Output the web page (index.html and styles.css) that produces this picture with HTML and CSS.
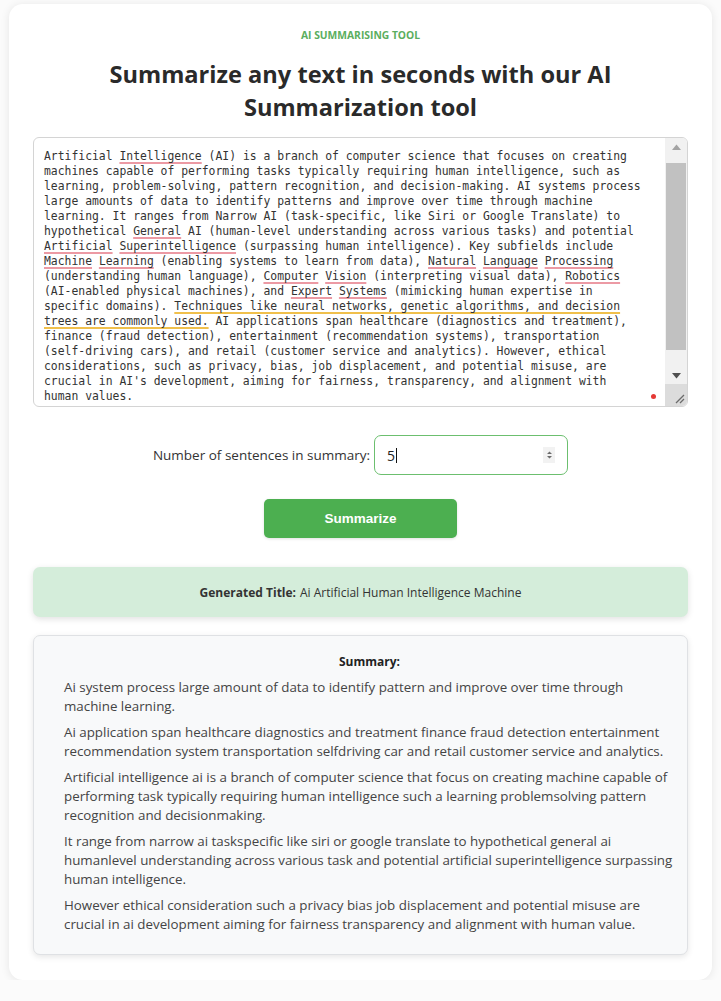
FILE: index.html
```html
<!DOCTYPE html>
<html lang="en">
<head>
<meta charset="utf-8">
<title>AI Summarising Tool</title>
<link rel="stylesheet" href="styles.css">
</head>
<body>
<main class="card">
  <p class="eyebrow">AI SUMMARISING TOOL</p>
  <h1 class="headline">Summarize any text in seconds with our AI Summarization tool</h1>

  <div class="editor">
    <div class="editor-text">
      <div class="editor-content">Artificial <span class="sp">Intelligence</span> (AI) is a branch of computer science that focuses on creating machines capable of performing tasks typically requiring human intelligence, such as learning, problem-solving, pattern recognition, and decision-making. AI systems process large amounts of data to identify patterns and improve over time through machine learning. It ranges from Narrow AI (task-specific, like Siri or Google Translate) to hypothetical <span class="sp">General</span> AI (human-level understanding across various tasks) and potential <span class="sp">Artificial</span> <span class="sp">Superintelligence</span> (surpassing human intelligence). Key subfields include <span class="sp">Machine</span> <span class="sp">Learning</span> (enabling systems to learn from data), <span class="sp">Natural</span> <span class="sp">Language</span> <span class="sp">Processing</span> (understanding human language), <span class="sp">Computer</span> <span class="sp">Vision</span> (interpreting visual data), <span class="sp">Robotics</span> (AI-enabled physical machines), and <span class="sp">Expert</span> <span class="sp">Systems</span> (mimicking human expertise in specific domains). <span class="gr">Techniques like neural networks, genetic algorithms, and decision trees are commonly used.</span> AI applications span healthcare (diagnostics and treatment), finance (fraud detection), entertainment (recommendation systems), transportation (self-driving cars), and retail (customer service and analytics). However, ethical considerations, such as privacy, bias, job displacement, and potential misuse, are crucial in AI's development, aiming for fairness, transparency, and alignment with human values.</div>
      <span class="status-dot"></span>
    </div>
    <div class="scrollbar">
      <div class="sb-arrow">
        <svg width="9" height="6" viewBox="0 0 9 6"><path d="M0 6 L4.5 0.5 L9 6 Z" fill="#a3a3a3"/></svg>
      </div>
      <div class="sb-track"><div class="sb-thumb"></div></div>
      <div class="sb-arrow">
        <svg width="9" height="6" viewBox="0 0 9 6"><path d="M0 0 L4.5 5.5 L9 0 Z" fill="#505050"/></svg>
      </div>
      <div class="sb-corner">
        <svg width="12" height="12" viewBox="0 0 12 12"><path d="M11 3 L3 11 M11 7 L7 11" stroke="#6b6b6b" stroke-width="1.3" fill="none"/></svg>
      </div>
    </div>
  </div>

  <div class="count-row">
    <label class="count-label">Number of sentences in summary:</label>
    <div class="count-input">
      <span class="count-value">5</span><span class="caret"></span>
      <span class="spin">
        <svg width="7" height="10" viewBox="0 0 7 10"><path d="M1 4 L3.5 1.5 L6 4 Z M1 6 L3.5 8.5 L6 6 Z" fill="#6b6b6b"/></svg>
      </span>
    </div>
  </div>

  <div class="actions">
    <button class="btn" type="button">Summarize</button>
  </div>

  <section class="title-box">
    <strong>Generated Title:</strong> Ai Artificial Human Intelligence Machine
  </section>

  <section class="summary-box">
    <h2 class="summary-head">Summary:</h2>
    <p>Ai system process large amount of data to identify pattern and improve over time through machine learning.</p>
    <p>Ai application span healthcare diagnostics and treatment finance fraud detection entertainment recommendation system transportation selfdriving car and retail customer service and analytics.</p>
    <p>Artificial intelligence ai is a branch of computer science that focus on creating machine capable of performing task typically requiring human intelligence such a learning problemsolving pattern recognition and decisionmaking.</p>
    <p>It range from narrow ai taskspecific like siri or google translate to hypothetical general ai humanlevel understanding across various task and potential artificial superintelligence surpassing human intelligence.</p>
    <p>However ethical consideration such a privacy bias job displacement and potential misuse are crucial in ai development aiming for fairness transparency and alignment with human value.</p>
  </section>
</main>
</body>
</html>
```

FILE: styles.css
```css
* { box-sizing: border-box; }

html, body {
  margin: 0;
  padding: 0;
  background: #fbfbfb;
}

body {
  font-family: "Open Sans", "Noto Sans", sans-serif;
  color: #333;
  padding: 4px 9px 0 9px;
}

.card {
  background: #ffffff;
  border-radius: 14px;
  box-shadow: 0 1px 10px rgba(0, 0, 0, 0.09);
  padding: 24px 24px 25px 24px;
  height: 976px;
}

.eyebrow {
  margin: 0;
  text-align: center;
  font-size: 10.3px;
  font-weight: 700;
  color: #5aae5e;
  line-height: 14px;
}

.headline {
  margin: 16px auto 13px auto;
  text-align: center;
  font-size: 23.6px;
  font-weight: 700;
  line-height: 33px;
  color: #2a2a2a;
  max-width: 600px;
}

/* editor */
.editor {
  display: flex;
  height: 270px;
  border: 1px solid #d4d4d4;
  border-radius: 6px;
  overflow: hidden;
  background: #fff;
}

.editor-text {
  flex: 1;
  position: relative;
  padding: 11px 0 4px 10px;
  font-family: "DejaVu Sans Mono", "Liberation Mono", monospace;
  font-size: 11.4px;
  line-height: 15px;
  color: #333;
}

.editor-content {
  width: 87.5ch;
}

.sp {
  text-decoration: underline;
  text-decoration-color: #ec9aa4;
  text-decoration-thickness: 1.5px;
  text-underline-offset: 2px;
  text-decoration-skip-ink: none;
}

.gr {
  text-decoration: underline;
  text-decoration-color: #f0c04c;
  text-decoration-thickness: 2px;
  text-underline-offset: 2px;
  text-decoration-skip-ink: none;
}

.status-dot {
  position: absolute;
  right: 9px;
  bottom: 7px;
  width: 5px;
  height: 5px;
  border-radius: 50%;
  background: #e53935;
}

.scrollbar {
  width: 22px;
  display: flex;
  flex-direction: column;
  background: #f1f1f1;
}

.sb-arrow {
  height: 17px;
  display: flex;
  align-items: center;
  justify-content: center;
}

.sb-track {
  flex: 1;
  padding: 8px 1px 0 1px;
}

.sb-thumb {
  height: 187px;
  background: #c1c1c1;
}

.sb-corner {
  height: 22px;
  background: #dcdcdc;
  display: flex;
  align-items: flex-end;
  justify-content: flex-end;
  padding: 0 2px 2px 0;
}

/* count row */
.count-row {
  display: flex;
  justify-content: center;
  align-items: center;
  gap: 4px;
  margin-top: 28px;
}

.count-label {
  font-size: 13.5px;
  color: #333;
}

.count-input {
  width: 194px;
  height: 40px;
  border: 1.5px solid #6cbf6f;
  border-radius: 7px;
  display: flex;
  align-items: center;
  padding: 0 12px 0 12px;
  font-size: 14px;
  color: #222;
}

.caret {
  width: 1px;
  height: 15px;
  background: #111;
  margin-left: 1px;
}

.spin {
  margin-left: auto;
  display: flex;
  align-items: center;
  justify-content: center;
  width: 12px;
  height: 16px;
  background: #f2f2f2;
}

/* button */
.actions {
  display: flex;
  justify-content: center;
  margin-top: 24px;
}

.btn {
  width: 193px;
  height: 39px;
  border: none;
  border-radius: 5px;
  background: #4caf50;
  color: #fff;
  font-family: "Liberation Sans", Arial, sans-serif;
  font-weight: 700;
  font-size: 13.5px;
  box-shadow: 0 1px 3px rgba(0, 0, 0, 0.12);
}

/* title */
.title-box {
  margin-top: 29px;
  height: 50px;
  background: #d4edda;
  border-radius: 7px;
  box-shadow: 0 2px 6px rgba(0, 0, 0, 0.12);
  display: flex;
  align-items: center;
  justify-content: center;
  gap: 4px;
  font-size: 12px;
  color: #333;
}

.title-box strong {
  font-weight: 700;
}

/* summary */
.summary-box {
  margin-top: 18px;
  height: 320px;
  background: #f8f9fa;
  border: 1px solid #dfe1e4;
  border-radius: 7px;
  box-shadow: 0 2px 6px rgba(0, 0, 0, 0.1);
  padding: 17px 12px 16px 30px;
}

.summary-head {
  margin: 0 0 8px 0;
  text-align: center;
  font-size: 12px;
  font-weight: 700;
  line-height: 17px;
  color: #222;
}

.summary-box p {
  margin: 0 0 7px 0;
  font-size: 13.35px;
  line-height: 19px;
  color: #444;
}
```
